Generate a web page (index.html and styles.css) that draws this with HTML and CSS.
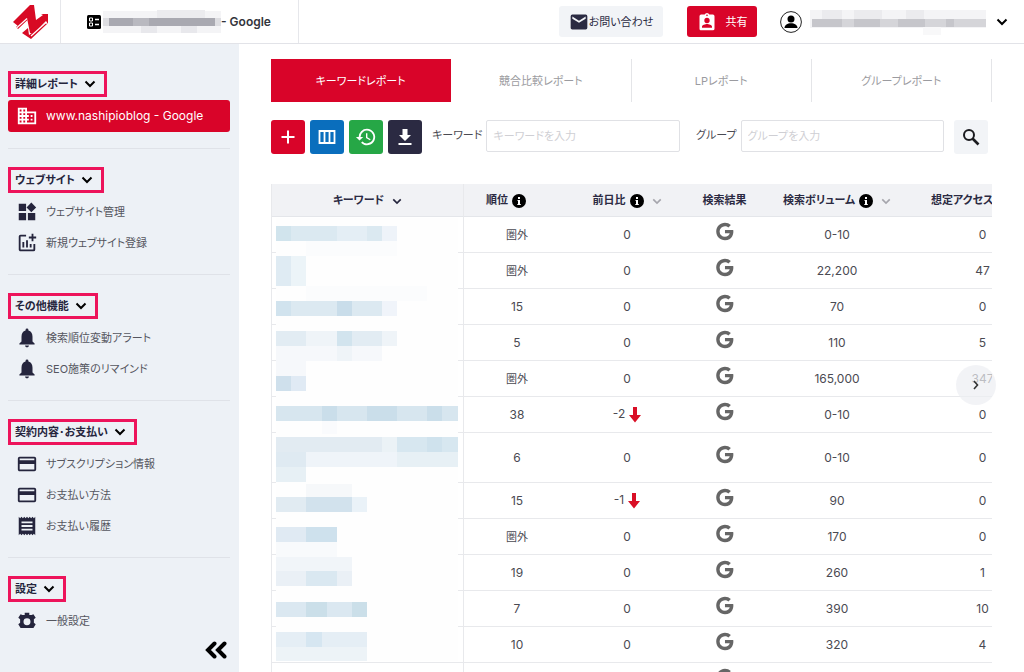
FILE: index.html
```
<!DOCTYPE html>
<html lang="ja">
<head>
<meta charset="utf-8">
<meta name="viewport" content="width=device-width, initial-scale=1">
<title>キーワードレポート</title>
<link rel="stylesheet" href="styles.css">
</head>
<body>
<svg class="sprite" aria-hidden="true">
  <symbol id="chevron" viewBox="0 0 12 8"><path d="M1.500 1.500 6 6l4.500-4.500" fill="none" stroke="currentColor" stroke-width="2"/></symbol>
  <symbol id="info" viewBox="0 0 14 14"><circle cx="7" cy="7" r="7"/><path d="M6 3h2v2H6zM5.500 6H8v4h.8v1H5.300v-1H6V7h-.5z" fill="#fff"/></symbol>
  <symbol id="google" viewBox="0 0 24 24"><path d="M12.545 10.239v3.821h5.445c-.712 2.315-2.647 3.972-5.445 3.972a6.033 6.033 0 1 1 0-12.064c1.498 0 2.866.549 3.921 1.453l2.814-2.814A9.969 9.969 0 0 0 12.545 2C7.021 2 2.543 6.477 2.543 12s4.478 10 10.002 10c8.396 0 10.249-7.850 9.426-11.748z"/></symbol>
  <symbol id="down" viewBox="0 0 12 16"><path d="M4 0h4v8h4l-6 7.500L0 8h4z"/></symbol>
  <symbol id="bell" viewBox="-1 -1 26 26"><path d="M12 23c1.300 0 2.300-1 2.300-2.200H9.700C9.700 22 10.700 23 12 23zm6.500-7v-5.500c0-3.600-1.500-6.500-4.800-7.300V2.500a1.700 1.700 0 0 0-3.400 0v.7C7 4 5.500 6.900 5.500 10.500V16L3 18.500v1.200h18v-1.200z"/></symbol>
  <symbol id="card" viewBox="0 0 24 24"><path d="M20 4H4a2 2 0 0 0-2 2v12c0 1.100.9 2 2 2h16a2 2 0 0 0 2-2V6a2 2 0 0 0-2-2zm0 14H4v-6h16zm0-10H4V6h16z"/></symbol>
</svg>

<header class="topbar">
  <a class="brand" href="#" aria-label="ホーム">
    <svg width="36" height="36" viewBox="0 0 36 36" fill="#d80a24"><path d="M1 18 18 1 22 1 24 16 31 11 29 10H36V20L34 17 22 29 18 29 15 14 6 22z"/><path d="M4 23 15 13 15.500 16 6 25zM10 29 16 24 17 31 33 19 35 20 19 35z"/><path d="M4.500 24 15 14.500M19 32 34 18.500" stroke="#fff" stroke-width="1.200"/></svg>
  </a>
  <div class="site">
    <svg width="14" height="14" viewBox="0 0 14 14"><rect width="14" height="14" rx="1.500"/><path d="M2.500 3h3v3h-3zM2.500 8h3v3h-3z" fill="none" stroke="#fff"/><path d="M8 4.500h4M8 9.500h4" stroke="#fff" stroke-width="1.300"/></svg>
    <svg class="redacted" width="118" height="24" viewBox="0 0 118 24"><path d="M0 1h118v22H0z" fill="#f4f4f6"/><path d="M54 0h48v8H54z" fill="#ececef"/><path d="M6 8h112v8H6z" fill="#b9b9c0"/><path d="M6 8h24v8H6zM46 8h66v8H46z" fill="#a9a9b1"/><path d="M0 8h6v8H0zM112 8h6v8h-6z" fill="#dddde1"/><path d="M38 16h16v7H38zM78 16h16v7H78z" fill="#e8e8ec"/></svg>
    <span class="site-name">- Google</span>
  </div>
  <div class="account">
    <button class="contact" type="button"><svg width="20" height="20" viewBox="0 0 24 24"><path d="M20 3H4a2 2 0 0 0-2 2v14c0 1.100.9 2 2 2h16a2 2 0 0 0 2-2V5a2 2 0 0 0-2-2zm0 5-8 5-8-5V5.500l8 5 8-5z"/></svg><span>お問い合わせ</span></button>
    <button class="share" type="button"><svg width="20" height="20" viewBox="0 0 24 24"><path d="M19 3h-4.200a3 3 0 0 0-5.600 0H5a2 2 0 0 0-2 2v15c0 1.100.9 2 2 2h14a2 2 0 0 0 2-2V5a2 2 0 0 0-2-2zm-7 0a1 1 0 1 1 0 2 1 1 0 0 1 0-2zm0 4a3.200 3.200 0 1 1 0 6.400A3.200 3.200 0 0 1 12 7zm6 12H6v-1.200c0-2.200 4-3.300 6-3.300s6 1.100 6 3.300z"/></svg><span>共有</span></button>
    <button class="user" type="button" aria-label="アカウント">
      <svg width="22" height="22" viewBox="0 0 22 22"><circle cx="11" cy="11" r="10.400" fill="#fff" stroke="#222"/><circle cx="11" cy="8" r="3.500"/><path d="M4.500 17c0-3 3-4.700 6.500-4.700s6.500 1.700 6.500 4.700z"/></svg>
      <svg class="user-name" width="176" height="26" viewBox="0 0 176 26"><path d="M0 1h176v18H0z" fill="#f4f4f6"/><path d="M12 1h20v9H12zM44 1h28v9H44zM96 1h18v9H96z" fill="#ebebee"/><path d="M2 10h174v8H2z" fill="#d5d5d9"/><path d="M2 10h30v8H2zM44 10h26v8H44zM88 10h27v8H88zM136 10h8v8h-8z" fill="#c6c6cb"/><path d="M113 18h18v8h-18z" fill="#f8f8f9"/></svg>
      <svg width="12" height="8"><use href="#chevron"/></svg>
    </button>
  </div>
</header>

<div class="shell">
  <nav class="sidebar">
    <section class="group">
      <button class="group-title" type="button">詳細レポート<svg width="12" height="8"><use href="#chevron"/></svg></button>
      <a class="item active" href="#"><svg width="22" height="22" viewBox="0 0 24 24"><path d="M12 7V3H2v18h20V7zM6 19H4v-2h2zm0-4H4v-2h2zm0-4H4V9h2zm0-4H4V5h2zm4 12H8v-2h2zm0-4H8v-2h2zm0-4H8V9h2zm0-4H8V5h2zm10 12h-8v-2h2v-2h-2v-2h2v-2h-2V9h8zm-2-8h-2v2h2zm0 4h-2v2h2z"/></svg>www.nashipioblog - Google</a>
    </section>
    <section class="group">
      <button class="group-title" type="button">ウェブサイト<svg width="12" height="8"><use href="#chevron"/></svg></button>
      <a class="item" href="#"><svg width="22" height="22" viewBox="0 0 24 24"><path d="M13 13h8v8h-8zM3 21h8v-8H3zM3 3h8v8H3zm13.700-1.300L11.500 7l5.200 5.200L22 7z"/></svg>ウェブサイト管理</a>
      <a class="item" href="#"><svg width="22" height="22" viewBox="0 0 24 24"><path d="M22 5v2h-3v3h-2V7h-3V5h3V2h2v3zm-3 14H5V5h6V3H5a2 2 0 0 0-2 2v14c0 1.100.9 2 2 2h14a2 2 0 0 0 2-2v-6h-2zm-4-6v4h2v-4zm-4 4h2V9h-2zm-2 0v-6H7v6z"/></svg>新規ウェブサイト登録</a>
    </section>
    <section class="group">
      <button class="group-title" type="button">その他機能<svg width="12" height="8"><use href="#chevron"/></svg></button>
      <a class="item" href="#"><svg width="22" height="22"><use href="#bell"/></svg>検索順位変動アラート</a>
      <a class="item" href="#"><svg width="22" height="22"><use href="#bell"/></svg>SEO施策のリマインド</a>
    </section>
    <section class="group">
      <button class="group-title" type="button">契約内容･お支払い<svg width="12" height="8"><use href="#chevron"/></svg></button>
      <a class="item" href="#"><svg width="22" height="22"><use href="#card"/></svg>サブスクリプション情報</a>
      <a class="item" href="#"><svg width="22" height="22"><use href="#card"/></svg>お支払い方法</a>
      <a class="item" href="#"><svg width="22" height="22" viewBox="0 0 24 24"><path d="M18 17H6v-2h12zm0-4H6v-2h12zm0-4H6V7h12zM3 22l1.500-1.500L6 22l1.500-1.500L9 22l1.500-1.500L12 22l1.500-1.500L15 22l1.500-1.500L18 22l1.500-1.500L21 22V2l-1.500 1.500L18 2l-1.500 1.500L15 2l-1.500 1.500L12 2l-1.500 1.500L9 2 7.500 3.500 6 2 4.500 3.500 3 2z"/></svg>お支払い履歴</a>
    </section>
    <section class="group">
      <button class="group-title" type="button">設定<svg width="12" height="8"><use href="#chevron"/></svg></button>
      <a class="item" href="#"><svg width="22" height="22" viewBox="0 0 24 24"><path fill-rule="evenodd" d="M9.500 3h5v2.500h2.500l2-1 2.500 4-2 1.500v4l2 1.500-2.500 4H5l-2.500-4 2-1.500v-4l-2-1.500 2.500-4 2 1h2.500zM12 9a3.800 3.800 0 1 0 0 7.600A3.800 3.800 0 0 0 12 9z"/></svg>一般設定</a>
    </section>
    <button class="collapse" type="button" aria-label="メニューを閉じる"><svg width="24" height="18" viewBox="0 0 24 18"><path d="M10.500 2.500 4 9l6.500 6.500M20.500 2.500 14 9l6.500 6.500" fill="none" stroke="currentColor" stroke-width="4" stroke-linecap="round"/></svg></button>
  </nav>

  <main class="content">
    <nav class="tabs">
      <a class="tab current" href="#">キーワードレポート</a>
      <a class="tab" href="#">競合比較レポート</a>
      <a class="tab" href="#">LPレポート</a>
      <a class="tab" href="#">グループレポート</a>
    </nav>

    <form class="toolbar">
      <div class="actions">
        <button class="action red" type="button" aria-label="追加"><svg width="20" height="20" viewBox="0 0 20 20"><path d="M10 3.500v13M3.500 10h13" stroke="#fff" stroke-width="2"/></svg></button>
        <button class="action blue" type="button" aria-label="列"><svg width="20" height="20" viewBox="0 0 20 20"><path d="M2.500 4h15v12h-15zM7.500 4v12M12.500 4v12" fill="none" stroke="#fff" stroke-width="1.800"/></svg></button>
        <button class="action green" type="button" aria-label="履歴"><svg width="22" height="22" viewBox="0 0 24 24" fill="#fff"><path d="M13 3a9 9 0 0 0-9 9H1l3.900 3.900L9 12H6a7 7 0 1 1 2.060 4.940l-1.420 1.420A9 9 0 1 0 13 3zm-1 5v5l4.280 2.540.72-1.210-3.500-2.080V8z"/></svg></button>
        <button class="action navy" type="button" aria-label="ダウンロード"><svg width="20" height="20" viewBox="0 0 20 20" fill="#fff"><path d="M7.500 2h5v6H16l-6 6-6-6h3.500zM3.500 16h13v2h-13z"/></svg></button>
      </div>
      <div class="field keyword-field"><label for="kw">キーワード</label><input id="kw" type="text" placeholder="キーワードを入力"></div>
      <div class="field group-field"><label for="gr">グループ</label><input id="gr" type="text" placeholder="グループを入力"></div>
      <button class="search" type="submit" aria-label="検索"><svg width="18" height="18" viewBox="0 0 18 18" fill="none" stroke="#1b1b1f" stroke-width="2"><circle cx="7" cy="7" r="5"/><path d="m10.500 10.500 6 6" stroke-width="2.600"/></svg></button>
    </form>

    <div class="table-scroll">
      <table class="report">
        <colgroup><col class="c-keyword"><col class="c-rank"><col class="c-diff"><col class="c-result"><col class="c-volume"><col class="c-access"></colgroup>
        <thead>
          <tr>
            <th>キーワード<svg class="sort on" width="10" height="7"><use href="#chevron"/></svg></th>
            <th class="rank">順位<svg class="info" width="14" height="14"><use href="#info"/></svg></th>
            <th>前日比<svg class="info" width="14" height="14"><use href="#info"/></svg><svg class="sort" width="10" height="7"><use href="#chevron"/></svg></th>
            <th>検索結果</th>
            <th>検索ボリューム<svg class="info" width="14" height="14"><use href="#info"/></svg><svg class="sort" width="10" height="7"><use href="#chevron"/></svg></th>
            <th class="access">想定アクセス</th>
          </tr>
        </thead>
        <tbody>
          <tr><td></td><td class="out">圏外</td><td>0</td><td><svg class="g" width="21" height="21"><use href="#google"/></svg></td><td>0-10</td><td>0</td></tr>
          <tr><td></td><td class="out">圏外</td><td>0</td><td><svg class="g" width="21" height="21"><use href="#google"/></svg></td><td>22,200</td><td>47</td></tr>
          <tr><td></td><td>15</td><td>0</td><td><svg class="g" width="21" height="21"><use href="#google"/></svg></td><td>70</td><td>0</td></tr>
          <tr><td></td><td>5</td><td>0</td><td><svg class="g" width="21" height="21"><use href="#google"/></svg></td><td>110</td><td>5</td></tr>
          <tr><td></td><td class="out">圏外</td><td>0</td><td><svg class="g" width="21" height="21"><use href="#google"/></svg></td><td>165,000</td><td>347</td></tr>
          <tr><td></td><td>38</td><td>-2<svg class="down" width="12" height="16"><use href="#down"/></svg></td><td><svg class="g" width="21" height="21"><use href="#google"/></svg></td><td>0-10</td><td>0</td></tr>
          <tr class="tall"><td></td><td>6</td><td>0</td><td><svg class="g" width="21" height="21"><use href="#google"/></svg></td><td>0-10</td><td>0</td></tr>
          <tr><td></td><td>15</td><td>-1<svg class="down" width="12" height="16"><use href="#down"/></svg></td><td><svg class="g" width="21" height="21"><use href="#google"/></svg></td><td>90</td><td>0</td></tr>
          <tr><td></td><td class="out">圏外</td><td>0</td><td><svg class="g" width="21" height="21"><use href="#google"/></svg></td><td>170</td><td>0</td></tr>
          <tr><td></td><td>19</td><td>0</td><td><svg class="g" width="21" height="21"><use href="#google"/></svg></td><td>260</td><td>1</td></tr>
          <tr><td></td><td>7</td><td>0</td><td><svg class="g" width="21" height="21"><use href="#google"/></svg></td><td>390</td><td>10</td></tr>
          <tr><td></td><td>10</td><td>0</td><td><svg class="g" width="21" height="21"><use href="#google"/></svg></td><td>320</td><td>4</td></tr>
          <tr><td></td><td></td><td></td><td><svg class="g" width="21" height="21"><use href="#google"/></svg></td><td></td><td></td></tr>
        </tbody>
      </table>
      <svg class="mosaic" width="182" height="443" viewBox="0 0 182 443" aria-hidden="true">
        <path fill="#fefefe" d="M0 0h182v443H0z"/>
        <g transform="translate(0 -217)">
          <path fill="#dbe9f1" d="M0 225h61v15H0zM91 225h15v15H91z"/><path fill="#d1e4ed" d="M0 225h15v15H0z"/><path fill="#e4eef5" d="M61 225h30v15H61z"/><path fill="#eef3f9" d="M106 225h15v15h-15z"/>
          <path fill="#fbfcfd" d="M30 240h91v15H30zM30 285h121v15H30z"/>
          <path fill="#dfebf3" d="M0 255h15v30H0z"/><path fill="#ecf4f8" d="M15 255h15v30H15z"/>
          <path fill="#dce9f1" d="M0 300h106v15H0z"/><path fill="#d1e3ee" d="M0 300h15v15H0z"/><path fill="#c9ddea" d="M61 300h15v15H61z"/><path fill="#f0f4fa" d="M106 300h15v15h-15z"/>
          <path fill="#e2ecf3" d="M0 330h121v15H0z"/><path fill="#d2e4ee" d="M61 330h15v15H61z"/><path fill="#eff4f8" d="M30 330h31v15H30zM106 330h15v15h-15zM61 345h15v15H61z"/><path fill="#f6f8fb" d="M0 345h61v15H0zM76 345h30v15H76zM0 360h30v15H0z"/>
          <path fill="#cfe0ec" d="M0 375h15v15H0z"/><path fill="#e0eaf4" d="M15 375h15v15H15z"/>
          <path fill="#d7e6ef" d="M0 405h182v15H0z"/><path fill="#cadeea" d="M46 405h15v15H46zM91 405h30v15H91zM151 405h15v15h-15z"/>
          <path fill="#fafbfd" d="M46 420h15v13H46z"/>
          <path fill="#e2ebf2" d="M0 436h106v15H0z"/><path fill="#ebf2f6" d="M106 436h15v15h-15z"/><path fill="#d7e7f0" d="M121 436h61v15h-61z"/><path fill="#cfe2ed" d="M151 436h15v15h-15z"/>
          <path fill="#dfeaf2" d="M0 451h30v15H0z"/><path fill="#eff4f9" d="M30 451h91v15H30z"/><path fill="#e7f0f5" d="M121 451h61v15h-61zM0 466h30v15H0z"/>
          <path fill="#f6f8fa" d="M30 483h46v13H30z"/><path fill="#e1ebf2" d="M0 496h30v15H0z"/><path fill="#d2e2ed" d="M30 496h46v15H30z"/><path fill="#eaf2f8" d="M76 496h15v15H76z"/>
          <path fill="#e0eaf3" d="M0 526h30v15H0z"/><path fill="#cee1ed" d="M30 526h31v15H30z"/><path fill="#f8fafc" d="M0 541h61v15H0z"/>
          <path fill="#f1f5f9" d="M0 556h76v15H0z"/><path fill="#eaf0f6" d="M0 570h76v15H0z"/><path fill="#dae8f1" d="M30 570h31v15H30z"/>
          <path fill="#dbe8f1" d="M0 601h91v15H0z"/><path fill="#cbdfe9" d="M30 601h21v15H30zM76 601h15v15H76z"/>
          <path fill="#e5eef5" d="M0 631h91v15H0z"/><path fill="#d6e6f1" d="M30 631h16v15H30z"/><path fill="#edf3f7" d="M0 646h91v15H0z"/>
        </g>
      </svg>
    </div>
    <button class="scroll-next" type="button" aria-label="右へ"><svg width="8" height="12" viewBox="0 0 8 12"><path d="m2 2 3.500 4L2 10" fill="none" stroke="currentColor" stroke-width="1.600"/></svg></button>
  </main>
</div>
</body>
</html>
```
FILE: styles.css
```
* { box-sizing: border-box; }
body {
  margin: 0;
  height: 100vh;
  display: flex;
  flex-direction: column;
  overflow: hidden;
  background: #fff;
  color: #4a4a52;
  fill: currentColor;
  font-family: Inter, "Noto Sans CJK JP", sans-serif;
  font-size: 11px;
  font-feature-settings: "palt";
  line-height: 16px;
}
button, input { font: inherit; font-feature-settings: inherit; color: inherit; }
button { border: 0; padding: 0; background: none; cursor: pointer; }
a { color: inherit; text-decoration: none; }
svg { flex: none; }
.sprite { position: absolute; width: 0; height: 0; }

.topbar {
  flex: none;
  display: flex;
  height: 44px;
  border-bottom: 1px solid #e2e3e8;
}
.brand {
  display: flex;
  align-items: center;
  justify-content: center;
  width: 61px;
  border-right: 1px solid #e6e7eb;
}
.site {
  display: flex;
  align-items: center;
  width: 238px;
  padding-left: 26px;
  border-right: 1px solid #e6e7eb;
  color: #000;
}
.redacted { margin-left: 2px; }
.site-name { color: #33343c; font-size: 12px; font-weight: 600; }
.account {
  flex: 1;
  display: flex;
  align-items: center;
  justify-content: flex-end;
  padding-right: 16px;
  color: #2a2a42;
}
.contact, .share {
  display: flex;
  align-items: center;
  justify-content: center;
  height: 31px;
  border-radius: 3px;
}
.contact { width: 104px; background: #f2f4f7; }
.share {
  width: 70px;
  gap: 9px;
  margin-left: 24px;
  background: #d90429;
  color: #fff;
}
.user { display: flex; align-items: center; margin-left: 23px; color: #000; }
.user-name { margin: 0 10px 0 8px; }

.shell { flex: 1; display: flex; min-height: 0; }
.sidebar {
  flex: none;
  display: flex;
  flex-direction: column;
  width: 239px;
  padding: 9px 9px 0 8px;
  background: #edf1f6;
  color: #55565f;
}
.group { padding: 15px 0 16px; }
.group + .group { border-top: 1px solid #dfe2e8; }
.group:last-of-type { padding-bottom: 5px; }
.group-title {
  display: flex;
  align-items: center;
  gap: 6px;
  height: 26px;
  margin: 3px 0;
  padding: 0 8px 0 4px;
  border: 3px solid #ed145b;
  color: #25253d;
  font-weight: 600;
}
.group-title svg { color: #000; }
.item {
  display: flex;
  align-items: center;
  gap: 8px;
  height: 31px;
  padding-left: 8px;
  border-radius: 3px;
}
.item svg { color: #25253d; }
.item.active { height: 32px; background: #d90429; color: #fff; font-size: 12px; }
.item.active svg { color: #fff; }
.collapse { align-self: flex-end; margin-right: 2px; color: #000; }
.collapse svg { display: block; }

.content {
  flex: 1;
  min-width: 0;
  padding: 15px 32px 0;
  overflow: hidden;
}
.tabs { display: grid; grid-template-columns: repeat(4, 1fr); }
.tab {
  display: flex;
  align-items: center;
  justify-content: center;
  height: 43px;
  border-right: 1px solid #e4e5e8;
  color: #9b9ba0;
}
.tab.current { border-color: #d90429; background: #d90429; color: #fff; }

.toolbar { display: flex; align-items: flex-start; margin-top: 18px; padding-right: 4px; }
.actions { display: flex; gap: 5px; }
.action, .search {
  display: flex;
  align-items: center;
  justify-content: center;
  width: 34px;
  height: 34px;
  border-radius: 3px;
}
.red { background: #d90429; }
.blue { background: #0a6ebd; }
.green { background: #26a746; }
.navy { background: #2b2a42; }
.field { display: flex; gap: 4px; min-width: 0; }
.field label { padding-top: 7px; white-space: nowrap; }
.field input {
  flex: 1;
  min-width: 0;
  height: 32px;
  padding: 0 6px;
  border: 1px solid #e0e1e5;
  border-radius: 2px;
  background: #fff;
}
.field input::placeholder { color: #cfcfd4; }
.keyword-field { flex: 1; margin-left: 10px; }
.group-field { flex: 1; margin-left: 16px; }
.search { margin-left: 10px; background: #f2f4f7; }

.table-scroll {
  position: relative;
  margin-top: 30px;
  overflow-x: auto;
  scrollbar-width: none;
  border-left: 1px solid #e8e9ec;
}
.report {
  width: 784px;
  min-width: 100%;
  table-layout: fixed;
  border-collapse: separate;
  border-spacing: 0;
  font-size: 12px;
}
.c-keyword { width: 192px; }
.c-rank { width: 106px; }
.c-diff { width: 114px; }
.c-result { width: 81px; }
.c-volume { width: 144px; }
.report th {
  height: 33px;
  padding: 0;
  border-bottom: 1px solid #e4e6ea;
  background: #f1f2f5;
  color: #2b2a42;
  font-size: 11px;
  font-weight: 600;
  white-space: nowrap;
}
.report td {
  height: 36px;
  padding: 0;
  border-bottom: 1px solid #e8e9ec;
  text-align: center;
}
.report th:first-child, .report td:first-child { border-right: 1px solid #e8e9ec; }
.report .tall td { height: 50px; }
.report .out { font-size: 11px; }
.report th.rank { padding-right: 22px; }
.report th.access { padding-left: 22px; text-align: left; }
.info { margin-left: 4px; color: #000; vertical-align: middle; }
.sort { margin-left: 8px; color: #a6a6ad; vertical-align: middle; }
.sort.on { color: #25253d; }
.g { display: block; margin: 0 auto 6px; color: #666; }
.down { margin-left: 4px; color: #d90f26; vertical-align: middle; }
.mosaic { position: absolute; top: 34px; left: 4px; }

.scroll-next {
  position: fixed;
  top: 365px;
  right: 28px;
  display: flex;
  align-items: center;
  justify-content: center;
  width: 40px;
  height: 40px;
  border-radius: 50%;
  background: rgba(236, 238, 242, 0.7);
  color: #333;
}
```
